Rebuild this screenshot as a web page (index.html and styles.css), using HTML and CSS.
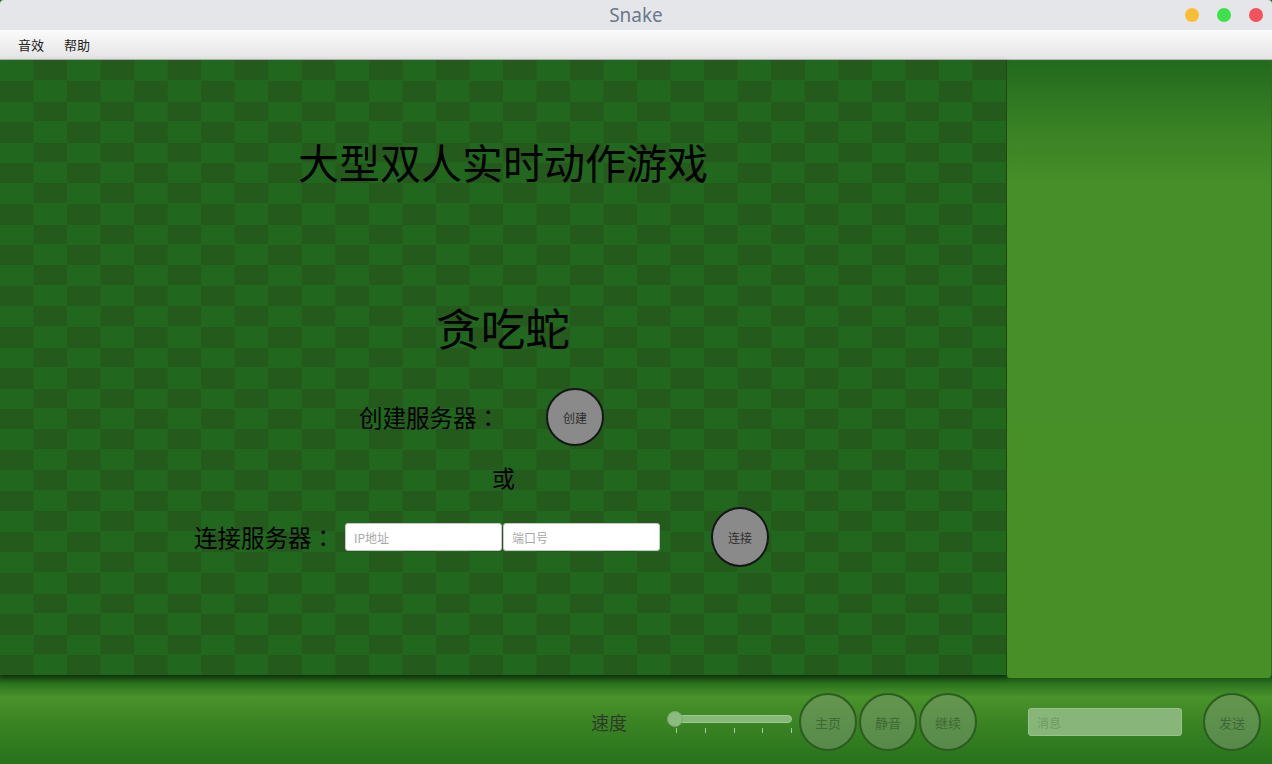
FILE: index.html
```html
<!DOCTYPE html>
<html lang="zh">
<head>
<meta charset="utf-8">
<title>Snake</title>
<link rel="stylesheet" href="styles.css">
</head>
<body>
<div class="window">
  <div class="titlebar">
    <span class="title">Snake</span>
    <div class="lights">
      <span class="light yellow"></span>
      <span class="light green"></span>
      <span class="light red"></span>
    </div>
  </div>
  <div class="menubar">
    <span class="menu-item">音效</span>
    <span class="menu-item">帮助</span>
  </div>
  <div class="main">
    <div class="board">
      <div class="headline">大型双人实时动作游戏</div>
      <div class="gamename">贪吃蛇</div>
      <div class="row row-create">
        <span class="label">创建服务器<span class="colon" lang="zh-TW">：</span></span>
        <button class="round">创建</button>
      </div>
      <div class="or">或</div>
      <div class="row row-connect">
        <span class="label">连接服务器<span class="colon" lang="zh-TW">：</span></span>
        <input class="field" type="text" placeholder="IP地址">
        <input class="field" type="text" placeholder="端口号">
        <button class="round round-connect">连接</button>
      </div>
    </div>
    <div class="side"></div>
  </div>
  <div class="bottombar">
    <span class="speed">速度</span>
    <div class="slider">
      <div class="track"></div>
      <div class="handle"></div>
      <div class="ticks">
        <span class="tick"></span><span class="tick"></span><span class="tick"></span><span class="tick"></span><span class="tick"></span>
      </div>
    </div>
    <div class="ctrl-group">
      <button class="ctrl">主页</button>
      <button class="ctrl">静音</button>
      <button class="ctrl">继续</button>
    </div>
    <input class="msg" type="text" placeholder="消息">
    <button class="ctrl send">发送</button>
  </div>
</div>
</body>
</html>
```
FILE: styles.css
```css
* { box-sizing: border-box; }
html, body {
  margin: 0;
  padding: 0;
  width: 1272px;
  height: 764px;
  overflow: hidden;
  background: #2a6f1f;
  font-family: "Noto Sans CJK SC", "Noto Sans", sans-serif;
}
.window {
  width: 1272px;
  height: 764px;
  display: flex;
  flex-direction: column;
}
.titlebar {
  height: 30px;
  background: #e5e6ea;
  display: flex;
  align-items: center;
  justify-content: center;
  position: relative;
  border-radius: 4px 4px 0 0;
}
.title {
  font-family: "Noto Sans", "Open Sans", sans-serif;
  font-size: 19px;
  color: #6b7889;
  line-height: 30px;
}
.lights {
  position: absolute;
  right: 9px;
  top: 8px;
  display: flex;
  gap: 18px;
}
.light {
  width: 14px;
  height: 14px;
  border-radius: 50%;
  display: block;
}
.yellow { background: #f8bf35; }
.green { background: #3de14b; }
.red { background: #f3525b; }
.menubar {
  height: 30px;
  background: linear-gradient(#fbfbfb, #e4e4e4);
  border-bottom: 1px solid #b5b5b5;
  display: flex;
  align-items: center;
  padding-left: 18px;
  gap: 20px;
}
.menu-item {
  font-size: 13px;
  color: #222;
  line-height: 18px;
}
.main {
  height: 615px;
  display: flex;
  position: relative;
  z-index: 1;
}
.board {
  width: 1007px;
  height: 615px;
  border-right: 1px solid #1b4a15;
  background: repeating-conic-gradient(#245a1c 0 25%, #21671e 0 50%) 0 0 / 67.07px 41px;
  box-shadow: 0 3px 6px rgba(0, 0, 0, 0.35);
  display: flex;
  flex-direction: column;
  padding-top: 77px;
}
.headline {
  font-size: 41px;
  line-height: 48px;
  text-align: center;
  color: #000;
}
.gamename {
  margin-top: 116px;
  font-size: 44.5px;
  line-height: 52px;
  text-align: center;
  color: #000;
}
.row {
  display: flex;
  align-items: center;
}
.label {
  font-size: 23.5px;
  color: #000;
  line-height: 30px;
}
.colon {
  font-family: "Noto Sans CJK TC", "Noto Sans CJK JP", sans-serif;
}
.row-create {
  margin-top: 35px;
  height: 58px;
  padding-left: 359px;
  gap: 46px;
}
.or {
  margin-top: 16px;
  height: 30px;
  font-size: 23px;
  line-height: 30px;
  padding-left: 492px;
  color: #000;
}
.row-connect {
  margin-top: 15px;
  height: 60px;
  padding-left: 194px;
}
.row-connect .label { margin-right: 10px; }
.round {
  width: 58px;
  height: 58px;
  border-radius: 50%;
  background: #8a8a8a;
  border: 2px solid #161616;
  font-family: "Noto Sans CJK SC", sans-serif;
  font-size: 12px;
  color: #2e2e2e;
  padding: 0;
}
.round-connect {
  height: 60px;
  margin-left: 50px;
}
.field {
  width: 157px;
  height: 28px;
  border: 1px solid #c8c8c8;
  border-radius: 3px;
  background: #fff;
  padding: 0 8px;
  font-family: "Noto Sans CJK SC", sans-serif;
  font-size: 12px;
  margin-right: 1px;
}
.field::placeholder { color: #a8a8a8; }
.side {
  width: 264px;
  margin-top: 1px;
  margin-bottom: -3px;
  border-radius: 3px;
  background: linear-gradient(#226a1e 0px, #3a8224 70px, #478f28 125px, #488f28 100%);
}
.bottombar {
  flex: 1;
  background: linear-gradient(#174912 0px, #2c751f 9px, #4a922a 22px, #3d8524 45px, #27721c 89px);
  display: flex;
  align-items: center;
  padding-left: 591px;
  padding-top: 5px;
}
.speed {
  font-size: 18px;
  color: #2d3a29;
  line-height: 24px;
  width: 36px;
  margin-right: 40px;
}
.slider {
  position: relative;
  width: 126px;
  height: 30px;
  margin-top: -6px;
}
.track {
  position: absolute;
  left: 8px;
  top: 11px;
  width: 117px;
  height: 8px;
  border-radius: 4px;
  background: #86b879;
  border: 1px solid #9cc891;
}
.handle {
  position: absolute;
  left: 0;
  top: 7px;
  width: 16px;
  height: 16px;
  border-radius: 50%;
  background: #8cbb7f;
  border: 1px solid #7aa96d;
}
.ticks {
  position: absolute;
  left: 9px;
  top: 24px;
  width: 116px;
  display: flex;
  justify-content: space-between;
}
.tick {
  width: 1px;
  height: 5px;
  background: #a4cf98;
}
.ctrl-group {
  display: flex;
  gap: 2px;
  margin-left: 6px;
}
.ctrl {
  width: 58px;
  height: 58px;
  border-radius: 50%;
  background: linear-gradient(#64964f, #578a4a);
  border: 2px solid #2b5c20;
  font-family: "Noto Sans CJK SC", sans-serif;
  font-size: 13px;
  color: #3e6a34;
  padding: 0;
}
.msg {
  margin-left: 51px;
  width: 154px;
  height: 28px;
  border: 1px solid #97c28a;
  border-radius: 3px;
  background: #88b67a;
  padding: 0 8px;
  font-family: "Noto Sans CJK SC", sans-serif;
  font-size: 12px;
}
.msg::placeholder { color: #6b9c5f; }
.send { margin-left: 21px; }
```
